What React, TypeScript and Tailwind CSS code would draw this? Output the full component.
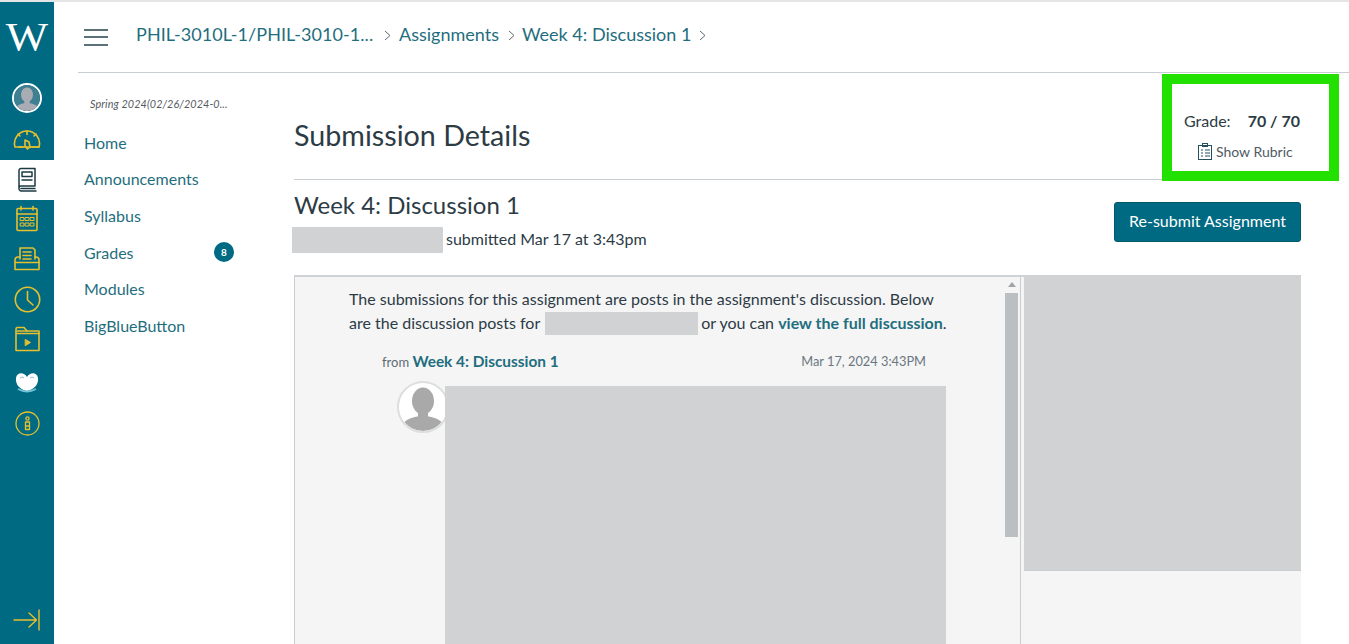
import React from "react";

const gold = "#e6c02f";

function Svg({ children, w = 28, h = 28, vb = "0 0 28 28", stroke = gold, sw = 1.6 }: { children: React.ReactNode; w?: number; h?: number; vb?: string; stroke?: string; sw?: number }) {
  return (
    <svg width={w} height={h} viewBox={vb} fill="none" stroke={stroke} strokeWidth={sw} strokeLinecap="round" strokeLinejoin="round">
      {children}
    </svg>
  );
}

const Person = ({ size, bg, fg }: { size: number; bg: string; fg: string }) => (
  <svg width={size} height={size} viewBox="0 0 48 48">
    <circle cx="24" cy="24" r="24" fill={bg} />
    <clipPath id={`c${size}`}><circle cx="24" cy="24" r="24" /></clipPath>
    <g clipPath={`url(#c${size})`} fill={fg}>
      <ellipse cx="24" cy="18" rx="11" ry="13.5" />
      <ellipse cx="24" cy="46" rx="22" ry="13" />
      <rect x="19" y="26" width="10" height="10" />
    </g>
  </svg>
);

const Chevron = () => (
  <svg width="7" height="11" viewBox="0 0 7 11" fill="none" stroke="#5f6a72" strokeWidth="1" className="mt-[2px]">
    <path d="M1 1l5 4.500-5 4.500" />
  </svg>
);

function Rail() {
  return (
    <aside className="w-[54px] shrink-0 bg-[#006a82] flex flex-col items-center h-[642px]">
      <div className="h-[70px] flex items-center justify-center w-full">
        <span className="text-[40px] leading-none text-white font-normal" style={{ fontFamily: '"Liberation Serif", serif', transform: "scaleX(1.12)" }}>W</span>
      </div>
      <div className="mt-[11px] w-[30px] h-[30px] rounded-full border-2 border-white overflow-hidden">
        <Person size={26} bg="#3f7f92" fg="#a9adb3" />
      </div>
      <div className="mt-[12px] h-[28px] flex items-center">
        <Svg w={28} h={24} vb="0 0 28 24">
          <path d="M2 20 A12.5 12.5 0 1 1 26 20 Z" />
          <path d="M6 20H10M18 20H26M14 7.500V4M7 9l-2-2M21 9l2-2" />
          <path d="M12 13l4 2 1 5-2.500 2-2.500-3z" />
        </Svg>
      </div>
      <div className="mt-[7px] w-full h-[40px] bg-white flex items-center justify-center">
        <Svg w={22} h={26} vb="0 0 22 26" stroke="#1d3a44" sw={1.5}>
          <path d="M3 21V3.500A2 2 0 0 1 5 1.500H19V19H5A2 2 0 0 0 3 21A2.500 2.500 0 0 0 5 24H20" />
          <rect x="6" y="5" width="10" height="4.500" />
          <path d="M6 13H16M5 21.500H19" />
        </Svg>
      </div>
      <div className="mt-[5px] h-[28px] flex items-center">
        <Svg w={24} h={28} vb="0 0 24 28">
          <rect x="2" y="3.500" width="20" height="22" rx="1" />
          <path d="M2 9H22M6 1.500V5M18 1.500V5" />
          <path d="M5.500 12.500h3.500v3h-3.500zM10.500 12.500h3.500v3h-3.500zM15.500 12.500h3.500v3h-3.500zM5.500 18h3.500v3h-3.500zM10.500 18h3.500v3h-3.500zM15.500 18h3.500v3h-3.500z" strokeWidth={1} />
        </Svg>
      </div>
      <div className="mt-[12px] h-[28px] flex items-center">
        <Svg w={28} h={26} vb="0 0 28 26">
          <path d="M7 13V2H20L22 4V13" />
          <path d="M10 6H18M10 9.500H18M10 13H18" />
          <path d="M7 11H4.500A3 3 0 0 0 2 14V23.500H26V14A3 3 0 0 0 23.500 11H22" />
          <path d="M2 16.500H26" />
        </Svg>
      </div>
      <div className="mt-[13px] h-[26px] flex items-center">
        <Svg w={27} h={27} vb="0 0 27 27">
          <circle cx="13.500" cy="13.500" r="12.200" />
          <path d="M13.500 5.500V14L19 19" />
        </Svg>
      </div>
      <div className="mt-[14px] h-[26px] flex items-center">
        <Svg w={27} h={26} vb="0 0 27 26">
          <path d="M2 24.500V3A1.500 1.500 0 0 1 3.500 1.500H10L13 5H25V24.500Z" />
          <path d="M3 7.500H25M3 5H13" />
          <path d="M11.500 13.500L16.500 16.500L11.500 19.500Z" fill={gold} strokeWidth={1} />
        </Svg>
      </div>
      <div className="mt-[19px] h-[22px] flex items-center">
        <svg width="24" height="22" viewBox="0 0 24 22">
          <path d="M12 6C9 1 2 1 1 7C0 14 6 19 12 20C18 19 24 14 23 7C22 1 15 1 12 6Z" fill="#fff" />
          <path d="M5 7q2-2 4 0M15 7q2-2 4 0" stroke="#8fc1cf" strokeWidth="1" fill="none" />
          <path d="M3 18q9 5 18 0" stroke="#6fc3d6" strokeWidth="2" fill="none" />
        </svg>
      </div>
      <div className="mt-[17px] h-[26px] flex items-center">
        <Svg w={25} h={25} vb="0 0 25 25" sw={1.3}>
          <circle cx="12.500" cy="12.500" r="11.500" />
          <circle cx="12.500" cy="7.500" r="1.600" />
          <rect x="10.500" y="11" width="4" height="7.500" />
          <path d="M10.500 15H14.500" />
        </Svg>
      </div>
      <div className="mt-auto mb-[13px]">
        <Svg w={28} h={22} vb="0 0 28 22" sw={1.4}>
          <path d="M1 11H23M16 4L23.500 11L16 18M26 1V21" />
        </Svg>
      </div>
    </aside>
  );
}

const nav = ["Home", "Announcements", "Syllabus", "Grades", "Modules", "BigBlueButton"];

function CourseNav() {
  return (
    <nav className="w-[216px] shrink-0 pl-[6px] pt-[23px]">
      <div className="text-[10.8px] italic leading-[16px] text-[#555b60] pl-[6px] mb-[18.700px] tracking-[0.1px]">Spring 2024(02/26/2024-0...</div>
      <ul className="flex flex-col gap-[13.700px] w-[150px]">
        {nav.map((n) => (
          <li key={n} className="flex items-center justify-between h-[23px] text-[16px] leading-[23px] text-[#1f6e7e]">
            <span>{n}</span>
            {n === "Grades" && (
              <span className="w-[20px] h-[20px] rounded-full bg-[#006a82] text-white text-[10px] font-bold flex items-center justify-center">8</span>
            )}
          </li>
        ))}
      </ul>
    </nav>
  );
}

const Redact = ({ className }: { className: string }) => <span className={`bg-[#d0d2d3] ${className}`} />;

function Submission() {
  return (
    <section className="w-[1007px] shrink-0">
      <div className="h-[107px] border-b border-[#c7cdd1] flex items-center">
        <h1 className="text-[28.7px] leading-[36px] text-[#2d3b45] mt-[17px]">Submission Details</h1>
      </div>
      <div className="flex justify-between h-[95px] pt-[10px]">
        <div>
          <h2 className="text-[24px] leading-[30px] text-[#2d3b45]">Week 4: Discussion 1</h2>
          <div className="flex items-center mt-[7px] -ml-[2px] text-[16px] text-[#2d3b45]">
            <Redact className="inline-block w-[151px] h-[26px]" />
            <span className="ml-[3px] mb-[2px]">submitted Mar 17 at 3:43pm</span>
          </div>
        </div>
        <button className="w-[187px] h-[40px] mt-[12px] pb-[2px] rounded-[3px] bg-[#006a82] border border-[#00586c] text-white text-[16px]">Re-submit Assignment</button>
      </div>
      <div className="flex h-[370px] border-t-2 border-[#cfd2d4] bg-[#f5f5f6]">
        <div className="w-[727px] shrink-0 border-l border-[#c7cdd1] border-r flex">
          <div className="w-[709px] pl-[54px] pt-[10px] text-[16px] leading-[24px] text-[#2d3b45]">
            <p className="w-[600px] h-[48px]">
              The submissions for this assignment are posts in the assignment's discussion. Below are the discussion posts for{" "}
              <Redact className="inline-block w-[153px] h-[23px] align-top mt-[1px] ml-[1px] -mr-[1px]" />{" "}or you can{" "}
              <span className="font-bold text-[#1f6e7e]">view the full discussion</span>.
            </p>
            <div className="flex justify-between items-center w-[544px] ml-[33px] mt-[14px] h-[24px]">
              <span className="text-[13px] text-[#5f6a72]">
                from <span className="text-[15.400px] font-bold text-[#1f6e7e]">Week 4: Discussion 1</span>
              </span>
              <span className="text-[12.800px] text-[#6b7780]">Mar 17, 2024 3:43PM</span>
            </div>
            <div className="flex ml-[48px] mt-[13px]">
              <div className="w-[52px] h-[52px] rounded-full border-2 border-[#dcdedf] overflow-hidden shrink-0 mt-[-5px] -mr-[4px]">
                <Person size={48} bg="#ffffff" fg="#a9a9a9" />
              </div>
              <div className="w-[501px] h-[300px] bg-[#d0d2d3] relative" />
            </div>
          </div>
          <div className="w-[15px] flex flex-col items-center pt-[5px]">
            <span className="w-0 h-0 border-l-[4px] border-r-[4px] border-b-[5px] border-l-transparent border-r-transparent border-b-[#a0a4a8]" />
            <div className="w-[13px] h-[244px] bg-[#bcbfc1] mt-[6px]" />
          </div>
        </div>
        <div className="flex-1 pl-[3px]">
          <div className="h-[294px] bg-[#d0d2d3] border-b border-[#c7cdd1]" />
        </div>
      </div>
    </section>
  );
}

export default function App() {
  return (
    <div className="relative h-[644px] w-[1349px] overflow-hidden bg-white border-t-2 border-[#e4e5e6]" style={{ fontFamily: 'Lato, "Liberation Sans", sans-serif' }}>
      <div className="flex">
        <Rail />
        <main className="flex-1 pl-[24px]">
          <header className="h-[71px] border-b border-[#c7cdd1] flex items-center">
            <div className="flex flex-col gap-[5.500px] ml-[6px] w-[24px]">
              <span className="h-[2px] bg-[#5b7077]" />
              <span className="h-[2px] bg-[#5b7077]" />
              <span className="h-[2px] bg-[#5b7077]" />
            </div>
            <div className="flex items-center ml-[28px] text-[18px] text-[#1f6e7e] -mt-[6px]">
              <span className="w-[236px] whitespace-nowrap tracking-[0.08px]">PHIL-3010L-1/PHIL-3010-1...</span>
              <span className="ml-[12px] mr-[8px] flex"><Chevron /></span>
              <span>Assignments</span>
              <span className="ml-[9px] mr-[7px] flex"><Chevron /></span>
              <span>Week 4: Discussion 1</span>
              <span className="ml-[8px] flex"><Chevron /></span>
            </div>
          </header>
          <div className="flex">
            <CourseNav />
            <Submission />
          </div>
        </main>
      </div>
      <div className="absolute left-[1162px] top-[72px] w-[177px] h-[107px] bg-white border-[10px] border-[#22e000] flex flex-col">
        <div className="flex items-center mt-[25px] pl-[12px] text-[#2d3b45]">
          <span className="text-[16px]">Grade:</span>
          <span className="ml-[17px] text-[16px] font-bold">70 / 70</span>
        </div>
        <div className="flex items-center mt-[8px] pl-[25px] text-[14px] text-[#4f5b63]">
          <svg width="16" height="17" viewBox="0 0 16 17" fill="none" stroke="#27505e" strokeWidth="1" className="mr-[3px]">
            <rect x="1.500" y="2.500" width="13" height="14" />
            <rect x="5.500" y="0.500" width="5" height="3" />
            <path d="M4 7h2M8 7h5M4 10h2M8 10h5M4 13h2M8 13h5" />
          </svg>
          <span>Show Rubric</span>
        </div>
      </div>
    </div>
  );
}
